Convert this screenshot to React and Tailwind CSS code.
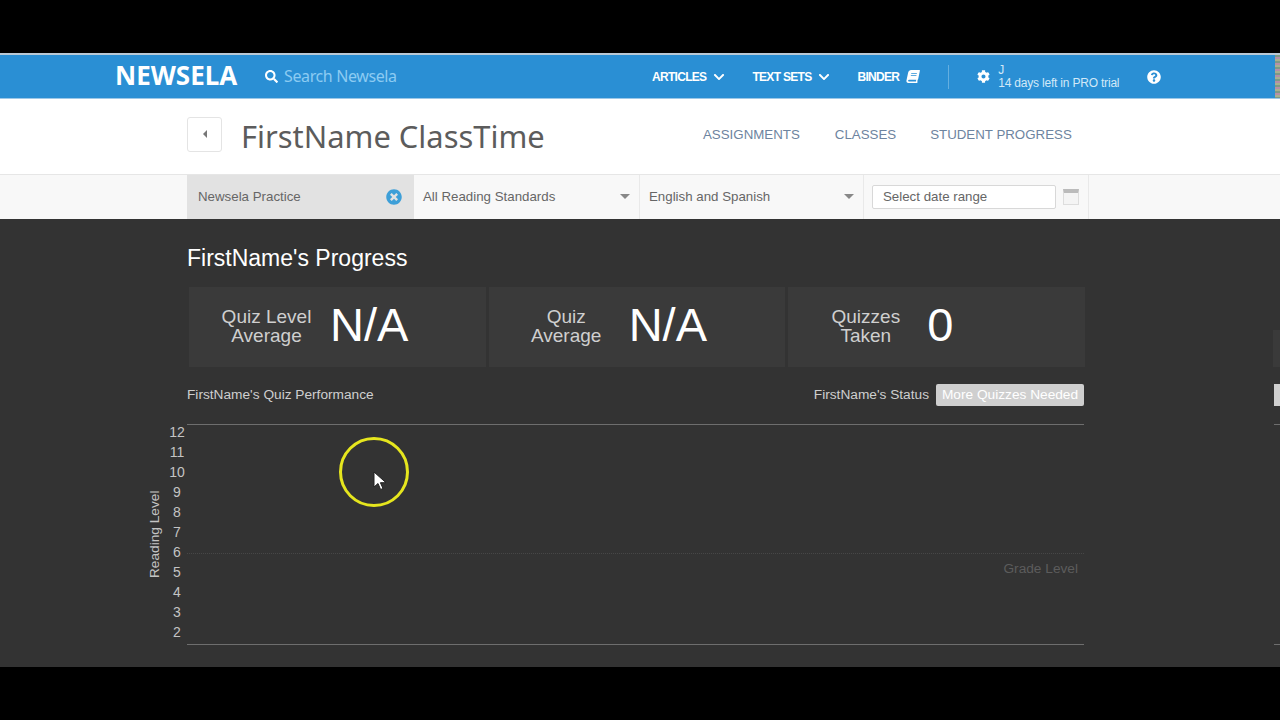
import { FaBook, FaChevronDown, FaCog, FaQuestionCircle, FaSearch, FaTimesCircle } from "react-icons/fa"

const stats = [
  { label: ["Quiz Level", "Average"], value: "N/A", valueMargin: "ml-[-14px]" },
  { label: ["Quiz", "Average"], value: "N/A", valueMargin: "ml-[-15px]" },
  { label: ["Quizzes", "Taken"], value: "0", valueMargin: "ml-[-16px]" },
]

const levels = [12, 11, 10, 9, 8, 7, 6, 5, 4, 3, 2]

function NavLink({ label, children }) {
  return (
    <div className="flex items-center gap-[7px] text-[12px] font-bold text-white tracking-[-0.7px]">
      {label}
      {children}
    </div>
  )
}

function Dropdown({ label, width }) {
  return (
    <div className={`${width} h-full flex items-center justify-between pl-[9px] pr-[9px] pb-[1px] border-r border-[#e9e9e9] text-[13.3px] text-[#666]`}>
      {label}
      <span className="w-0 h-0 border-x-[5px] border-x-transparent border-t-[5px] border-t-[#888]" />
    </div>
  )
}

export default function App() {
  return (
    <div className="h-[720px] w-[1280px] overflow-hidden bg-black flex flex-col font-['Liberation_Sans',sans-serif]">
      <div className="h-[53px] shrink-0" />

      {/* top bar */}
      <div className="h-[46px] shrink-0 bg-[#2a8fd4] border-t-2 border-t-[#b9c9d6] border-b border-b-[#9cc8e8] flex items-center pl-[115px]">
        <div className="w-[150px] pb-[2px] font-['Noto_Sans',sans-serif] text-[26px] font-bold text-white">NEWSELA</div>
        <FaSearch className="w-[13px] h-[13px] text-white" />
        <div className="ml-[6px] w-[368px] pb-[2px] font-['Noto_Sans',sans-serif] text-[16px] text-[#8ccbf2] tracking-[-0.38px]">Search Newsela</div>
        <NavLink label="ARTICLES">
          <FaChevronDown className="w-[12px] h-[12px]" />
        </NavLink>
        <div className="w-[27px]" />
        <NavLink label="TEXT SETS">
          <FaChevronDown className="w-[12px] h-[12px]" />
        </NavLink>
        <div className="w-[27px]" />
        <NavLink label="BINDER">
          <FaBook className="w-[14px] h-[13px] -skew-x-12" />
        </NavLink>
        <div className="ml-[28px] w-px h-[24px] bg-[#64afe0]" />
        <FaCog className="ml-[28px] w-[13px] h-[13px] text-white" />
        <div className="ml-[8px] w-[149px] text-[12px] leading-[13px] text-[#d2e9f8] tracking-[-0.2px]">
          <div>J</div>
          <div>14 days left in PRO trial</div>
        </div>
        <FaQuestionCircle className="w-[14px] h-[14px] text-white" />
        <div className="ml-auto w-[5px] h-full bg-[repeating-linear-gradient(180deg,#7f9a85_0px,#7f9a85_2px,#b58fa8_2px,#b58fa8_4px,#a8b090_4px,#a8b090_6px)]" />
      </div>

      {/* student header */}
      <div className="h-[75px] shrink-0 bg-white flex items-center pl-[187px] pb-[5px]">
        <div className="w-[35px] h-[35px] rounded-[3px] border border-[#e4e4e4] flex items-center justify-center">
          <span className="w-0 h-0 border-y-[4px] border-y-transparent border-r-[4px] border-r-[#777]" />
        </div>
        <div className="ml-[19px] mt-[4px] w-[462px] font-['Noto_Sans',sans-serif] text-[30.9px] text-[#5c5c5c]">FirstName ClassTime</div>
        <div className="mt-[2px] text-[13.3px] text-[#6d84a0]">ASSIGNMENTS</div>
        <div className="mt-[2px] ml-[35px] text-[13.3px] text-[#6d84a0]">CLASSES</div>
        <div className="mt-[2px] ml-[34px] text-[13.3px] text-[#6d84a0]">STUDENT PROGRESS</div>
      </div>

      {/* filters */}
      <div className="h-[45px] shrink-0 bg-[#f8f8f8] border-t border-[#e6e6e6] flex pl-[187px]">
        <div className="w-[227px] h-full bg-[#e2e2e2] flex items-center justify-between pl-[11px] pr-[12px] pb-[1px] text-[13.3px] text-[#666]">
          Newsela Practice
          <FaTimesCircle className="w-[16px] h-[16px] text-[#3d9fd8]" />
        </div>
        <Dropdown label="All Reading Standards" width="w-[226px]" />
        <Dropdown label="English and Spanish" width="w-[224px]" />
        <div className="w-[225px] h-full flex items-center pl-[8px] pb-[1px] border-r border-[#e9e9e9]">
          <div className="w-[184px] h-[24px] bg-white border border-[#d8d8d8] rounded-[2px] pl-[10px] flex items-center text-[13.3px] text-[#666]">Select date range</div>
          <div className="ml-[7px] w-[16px] h-[16px] bg-[#f4f4f4] border border-[#ddd] border-t-[4px] border-t-[#bbb]" />
        </div>
      </div>

      {/* progress panel */}
      <div className="flex-1 bg-[#333] flex flex-col">
        <div className="ml-[187px] mt-[26px] h-[26px] flex items-center text-[23px] text-white">FirstName's Progress</div>

        <div className="ml-[189px] mt-[16px] h-[80px] flex items-end">
          <div className="w-[896px] h-full flex gap-[3px]">
            {stats.map((s) => (
              <div key={s.label[0]} className="flex-1 bg-[#3a3a3a] flex items-center">
                <div className="w-[155px] pb-[2px] text-center text-[19px] leading-[19px] text-[#cfcfcf]">
                  <div>{s.label[0]}</div>
                  <div>{s.label[1]}</div>
                </div>
                <div className={`${s.valueMargin} pb-[6px] text-[47px] leading-none text-white`}>{s.value}</div>
              </div>
            ))}
          </div>
          <div className="ml-[188px] w-[7px] h-[37px] bg-[#3a3a3a]" />
        </div>

        <div className="ml-[187px] mt-[17px] h-[22px] flex items-center">
          <div className="w-[897px] flex items-center justify-between text-[13.7px] text-[#cfcfcf]">
            FirstName's Quiz Performance
            <div className="flex items-center gap-[7px]">
              FirstName's Status
              <span className="w-[148px] h-[22px] rounded-[2px] bg-[#cfcfcf] text-white flex items-center justify-center">More Quizzes Needed</span>
            </div>
          </div>
          <div className="ml-[190px] w-[6px] h-[22px] bg-[#cfcfcf]" />
        </div>

        <div className="ml-[148px] mt-[18px] flex items-start">
          <div className="w-[16px] h-[220px] flex items-center justify-center">
            <span className="block whitespace-nowrap -rotate-90 text-[13.7px] text-[#c4c4c4]">Reading Level</span>
          </div>
          <div className="ml-[6px] w-[14px] flex flex-col items-center text-[14px] leading-[20px] text-[#c4c4c4] mt-[-2px]">
            {levels.map((n) => (
              <div key={n}>{n}</div>
            ))}
          </div>
          <div className="ml-[3px] w-[897px] h-[221px] border-y border-[#6e6e6e]">
            <div className="h-[129px] border-b border-dotted border-[#474747]" />
            <div className="mt-[6px] pr-[6px] text-right text-[13.7px] leading-[18px] text-[#5c5c5c]">Grade Level</div>
          </div>
          <div className="ml-[190px] w-[6px] h-[221px] border-y border-[#6e6e6e]" />
        </div>
      </div>

      <div className="h-[53px] shrink-0" />

      {/* recorded cursor highlight */}
      <div className="absolute left-[339px] top-[437px] w-[70px] h-[70px] rounded-full border-[3px] border-[#e6e61e] flex items-center justify-center">
        <svg width="14" height="20" viewBox="0 0 14 20" className="mt-[18px] ml-[11px]">
          <path d="M1 1v15l4-3.5 2.6 6 2.4-1-2.6-5.8H13z" fill="#fff" stroke="#222" strokeWidth="1" />
        </svg>
      </div>
    </div>
  )
}
